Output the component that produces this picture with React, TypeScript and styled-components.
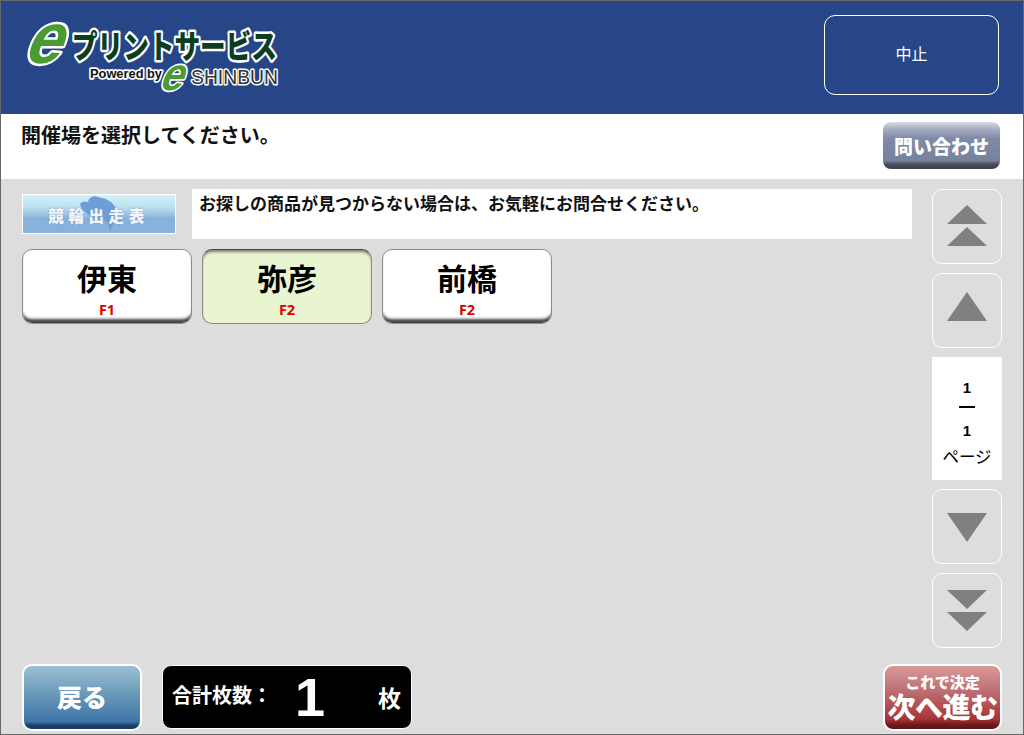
import React from 'react';
import styled, { createGlobalStyle, css } from 'styled-components';

const JP = `"Noto Sans CJK JP", "Liberation Sans", sans-serif`;

const GlobalStyle = createGlobalStyle`
	html, body {
		margin: 0;
		padding: 0;
		background: #dddddd;
	}
	body {
		font-family: ${JP};
	}
`;

const Frame = styled.div`
	box-sizing: border-box;
	width: 1024px;
	height: 735px;
	display: flex;
	flex-direction: column;
	border: 1px solid #666666;
	background: #dddddd;
	overflow: hidden;
`;

const Header = styled.header`
	flex: 0 0 113px;
	display: flex;
	align-items: flex-start;
	justify-content: space-between;
	padding: 14px 24px 0 24px;
	box-sizing: border-box;
	background: #264687;
`;

const CancelButton = styled.button`
	width: 175px;
	height: 80px;
	border: 1px solid #ffffff;
	border-radius: 11px;
	background: transparent;
	color: #ffffff;
	font-family: ${JP};
	font-size: 16px;
	padding: 0 0 4px;
`;

const TitleBar = styled.div`
	flex: 0 0 65px;
	display: flex;
	justify-content: space-between;
	box-sizing: border-box;
	padding: 8px 23px 0 20px;
	background: #ffffff;
`;

const Title = styled.h1`
	margin: 0;
	font-size: 20px;
	line-height: 26px;
	font-weight: 700;
	color: #111111;
`;

const GlossyButton = styled.button<{ $tone: 'slate' | 'blue' | 'red' }>`
	box-sizing: border-box;
	padding: 0;
	color: #ffffff;
	font-family: ${JP};
	font-weight: 900;
	${(p) =>
		p.$tone === 'slate' &&
		css`
			width: 117px;
			height: 47px;
			border: 0;
			border-radius: 8px;
			font-size: 19px;
			background: linear-gradient(#d9dce5 0, #a9b0c4 14%, #7f8aa8 35%, #77829f 82%, #4a4d58 90%, #3f4048 100%);
		`}
	${(p) =>
		p.$tone === 'blue' &&
		css`
			width: 120px;
			height: 67px;
			border: 2px solid #ffffff;
			border-radius: 10px;
			font-size: 25px;
			padding-bottom: 4px;
			background: linear-gradient(#9cc0d2 0, #6e9dbb 40%, #3f75a9 88%, #1d4368 94%, #17395c 100%);
		`}
	${(p) =>
		p.$tone === 'red' &&
		css`
			width: 119px;
			height: 67px;
			border: 2px solid #ffffff;
			border-radius: 10px;
			background: linear-gradient(#d79a9c 0, #bd6e72 40%, #a83235 85%, #6d1a1e 93%, #5c1417 100%);
		`}
`;

const NextSmall = styled.span`
	display: block;
	font-size: 15px;
	line-height: 16px;
	margin-top: 0;
`;

const NextBig = styled.span`
	display: block;
	font-size: 28px;
	line-height: 32px;
	white-space: nowrap;
	letter-spacing: -0.5px;
`;

const Body = styled.main`
	flex: 1;
	display: flex;
	justify-content: space-between;
	box-sizing: border-box;
	padding: 10px 21px 0 21px;
`;

const Content = styled.div`
	display: flex;
	flex-direction: column;
	gap: 10px;
`;

const InfoRow = styled.div`
	display: flex;
	align-items: flex-start;
	gap: 16px;
`;

const Banner = styled.div`
	position: relative;
	box-sizing: border-box;
	width: 154px;
	height: 40px;
	margin-top: 5px;
	border: 1px solid #ffffff;
	overflow: hidden;
	display: flex;
	align-items: center;
	justify-content: center;
	background: linear-gradient(#d2f3f8 0, #bfe2f0 30%, #9fc5e3 50%, #86b2dc 62%, #86b2dc 100%);
	color: #f2f6fa;
	font-size: 15.5px;
	font-weight: 900;
	letter-spacing: 4.6px;
	text-shadow: 0 0 2px #7b9cc0;
`;

const BannerRider = styled.svg`
	position: absolute;
	left: 54px;
	top: 0;
	width: 44px;
	height: 38px;
`;

const BannerLabel = styled.span`
	position: relative;
	margin-top: 2px;
	margin-right: 1px;
`;

const MessageBox = styled.div`
	box-sizing: border-box;
	width: 720px;
	height: 50px;
	padding: 2px 7px;
	background: #ffffff;
	font-size: 17px;
	line-height: 24px;
	font-weight: 700;
	color: #111111;
`;

const VenueList = styled.div`
	display: flex;
	gap: 10px;
`;

const VenueButton = styled.button<{ $active?: boolean }>`
	box-sizing: border-box;
	width: 170px;
	height: 75px;
	padding: 0;
	display: flex;
	flex-direction: column;
	align-items: center;
	border-radius: 10px;
	font-family: ${JP};
	color: #000000;
	${(p) =>
		p.$active
			? css`
					border: 1px solid #8b8b8b;
					border-top-color: #444444;
					background: #e9f5d0;
					box-shadow: inset 0 3px 3px -1px #7a8070;
				`
			: css`
					border: 1px solid #8a8a8a;
					background: #ffffff;
					box-shadow: inset 0 -6px 3px -2px #444444;
				`}
`;

const VenueName = styled.span`
	margin-top: 7px;
	font-size: 30px;
	line-height: 40px;
	font-weight: 700;
`;

const VenueGrade = styled.span`
	font-family: "Open Sans", "Liberation Sans", sans-serif;
	font-size: 14.5px;
	line-height: 16px;
	margin-top: 5px;
	font-weight: 700;
	color: #dd0000;
`;

const Pager = styled.nav`
	display: flex;
	flex-direction: column;
	gap: 9px;
	width: 70px;
`;

const PagerButton = styled.button`
	box-sizing: border-box;
	width: 70px;
	height: 75px;
	padding: 0;
	border: 1px solid #ffffff;
	border-radius: 10px;
	background: transparent;
	display: flex;
	align-items: center;
	justify-content: center;
`;

const PageInfo = styled.div`
	height: 123px;
	box-sizing: border-box;
	padding-top: 22px;
	background: #ffffff;
	display: flex;
	flex-direction: column;
	align-items: center;
	color: #000000;
`;

const PageNumber = styled.span`
	font-size: 15px;
	line-height: 18px;
	font-weight: 700;
	font-family: "Liberation Sans", sans-serif;
`;

const PageRule = styled.span`
	width: 16px;
	height: 2px;
	margin: 9px 0 14px;
	background: #000000;
`;

const PageLabel = styled.span`
	margin-top: 6px;
	font-size: 16.5px;
	line-height: 20px;
`;

const Footer = styled.footer`
	flex: 0 0 70px;
	display: flex;
	align-items: flex-start;
	box-sizing: border-box;
	padding: 0 21px 0 21px;
	gap: 20px;
`;

const TotalBox = styled.div`
	box-sizing: border-box;
	width: 250px;
	height: 64px;
	margin-top: 1px;
	padding: 0 10px 0 9px;
	display: flex;
	align-items: center;
	border: 1px solid #ffffff;
	border-radius: 9px;
	background: #000000;
	color: #ffffff;
	font-weight: 700;
`;

const TotalLabel = styled.span`
	font-size: 20px;
	line-height: 24px;
	margin-top: -4px;
	white-space: nowrap;
`;

const TotalCount = styled.span`
	width: 76px;
	text-align: center;
	font-family: "Liberation Sans", sans-serif;
	font-size: 54px;
	font-weight: 700;
	line-height: 60px;
`;

const TotalUnit = styled.span`
	margin-left: auto;
	font-size: 23px;
	line-height: 28px;
`;

const FooterSpacer = styled.div`
	flex: 1;
`;

const Logo = () => (
	<svg width="258" height="84" viewBox="0 0 258 84" fontFamily={JP}>
		<text transform="translate(-3 48) skewX(-22) scale(0.92 1)" fontFamily="'Liberation Sans', sans-serif" fontWeight="700" fontSize="72"
			fill="#4b9b35" stroke="#ffffff" strokeWidth="5" paintOrder="stroke" strokeLinejoin="round">e</text>
		<text x="47" y="43" fontWeight="900" fontSize="32" fill="#0b3d22" stroke="#ffffff" strokeWidth="5" paintOrder="stroke"
			strokeLinejoin="round" textLength="205" lengthAdjust="spacingAndGlyphs">プリントサービス</text>
		<text x="65" y="63" fontFamily="'Liberation Sans', sans-serif" fontWeight="700" fontSize="13" fill="#111111" stroke="#ffffff"
			strokeWidth="3.5" paintOrder="stroke" strokeLinejoin="round" textLength="72" lengthAdjust="spacingAndGlyphs">Powered by</text>
		<text transform="translate(133 75) skewX(-22) scale(0.9 1)" fontFamily="'Liberation Sans', sans-serif" fontWeight="700" fontSize="46"
			fill="#4b9b35" stroke="#ffffff" strokeWidth="3.5" paintOrder="stroke" strokeLinejoin="round">e</text>
		<text x="166" y="69" fontFamily="'Liberation Sans', sans-serif" fontSize="21" fill="#333333" stroke="#ffffff"
			strokeWidth="3" paintOrder="stroke" strokeLinejoin="round" textLength="87" lengthAdjust="spacingAndGlyphs">SHINBUN</text>
	</svg>
);

// 矢印は全部同じ灰色の三角
const Arrow = ({ points }: { points: string[] }) => (
	<svg width="40" height="44" viewBox="0 0 40 44">
		{points.map((p) => (
			<polygon key={p} points={p} fill="#808080" />
		))}
	</svg>
);

const venues = [
	{ name: '伊東', grade: 'F1' },
	{ name: '弥彦', grade: 'F2', active: true },
	{ name: '前橋', grade: 'F2' },
];

export default function App() {
	return (
		<Frame>
			<GlobalStyle />
			<Header>
				<Logo />
				<CancelButton>中止</CancelButton>
			</Header>
			<TitleBar>
				<Title>開催場を選択してください。</Title>
				<GlossyButton $tone="slate">問い合わせ</GlossyButton>
			</TitleBar>
			<Body>
				<Content>
					<InfoRow>
						<Banner>
							<BannerRider viewBox="0 0 44 38">
								<path d="M3 9 C5 6 8 6 11 7 C12 2 17 0 21 2 C28 3 35 6 38 12 C41 17 40 24 37 28 L33 36 L31 28 C26 25 18 24 12 20 C8 17 4 14 3 9 Z" fill="#6d9fd6" />
							</BannerRider>
							<BannerLabel>競輪出走表</BannerLabel>
						</Banner>
						<MessageBox>お探しの商品が見つからない場合は、お気軽にお問合せください。</MessageBox>
					</InfoRow>
					<VenueList>
						{venues.map((v) => (
							<VenueButton key={v.name} $active={v.active}>
								<VenueName>{v.name}</VenueName>
								<VenueGrade>{v.grade}</VenueGrade>
							</VenueButton>
						))}
					</VenueList>
				</Content>
				<Pager>
					<PagerButton>
						<Arrow points={['20,0 40,19 0,19', '20,22 40,41 0,41']} />
					</PagerButton>
					<PagerButton>
						<Arrow points={['20,3 40,32 0,32']} />
					</PagerButton>
					<PageInfo>
						<PageNumber>1</PageNumber>
						<PageRule />
						<PageNumber>1</PageNumber>
						<PageLabel>ページ</PageLabel>
					</PageInfo>
					<PagerButton>
						<Arrow points={['0,8 40,8 20,37']} />
					</PagerButton>
					<PagerButton>
						<Arrow points={['0,1 40,1 20,20', '0,23 40,23 20,42']} />
					</PagerButton>
				</Pager>
			</Body>
			<Footer>
				<GlossyButton $tone="blue">戻る</GlossyButton>
				<TotalBox>
					<TotalLabel>合計枚数：</TotalLabel>
					<TotalCount>1</TotalCount>
					<TotalUnit>枚</TotalUnit>
				</TotalBox>
				<FooterSpacer />
				<GlossyButton $tone="red">
					<NextSmall>これで決定</NextSmall>
					<NextBig>次へ進む</NextBig>
				</GlossyButton>
			</Footer>
		</Frame>
	);
}
